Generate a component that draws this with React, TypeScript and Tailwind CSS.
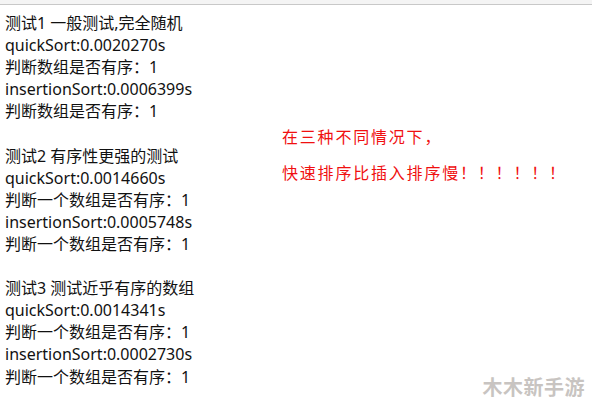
const blocks = [
  {
    title: '测试1 一般测试,完全随机',
    quick: 'quickSort:0.0020270s',
    insertion: 'insertionSort:0.0006399s',
    check: '判断数组是否有序：1',
  },
  {
    title: '测试2 有序性更强的测试',
    quick: 'quickSort:0.0014660s',
    insertion: 'insertionSort:0.0005748s',
    check: '判断一个数组是否有序：1',
  },
  {
    title: '测试3 测试近乎有序的数组',
    quick: 'quickSort:0.0014341s',
    insertion: 'insertionSort:0.0002730s',
    check: '判断一个数组是否有序：1',
  },
]

export default function App() {
  return (
    <div className="relative w-[592px] h-[406px] overflow-hidden bg-white">
      <div className="h-[4px] bg-[#f4f4f4]" />
      <div className="h-px bg-[#c8c8c8]" />

      <div className="flex">
        {/* Console output */}
        <div
          className="w-[282px] pl-[5px] pt-[7px] text-[16px] leading-[22.1px] text-[#111]"
          style={{ fontFamily: '"Noto Sans", "Noto Sans CJK SC", sans-serif' }}
        >
          {blocks.map((b, i) => (
            <div key={i} className="mb-[22.1px]">
              <div>{b.title}</div>
              <div>{b.quick}</div>
              <div>{b.check}</div>
              <div>{b.insertion}</div>
              <div>{b.check}</div>
            </div>
          ))}
        </div>

        {/* Note */}
        <div
          className="pt-[113px] text-[16px] leading-[36px] tracking-[1.8px] text-[#f01010]"
          style={{ fontFamily: '"Noto Sans CJK SC", sans-serif' }}
        >
          <div>在三种不同情况下，</div>
          <div>快速排序比插入排序慢！！！！！！</div>
        </div>
      </div>

      {/* Watermark */}
      <div
        className="absolute right-[7px] bottom-[9px] text-[20px] font-bold leading-none tracking-[0.5px] text-[#c8c4c1]"
        style={{ fontFamily: '"Noto Sans CJK SC", sans-serif' }}
      >
        木木新手游
      </div>
    </div>
  )
}
